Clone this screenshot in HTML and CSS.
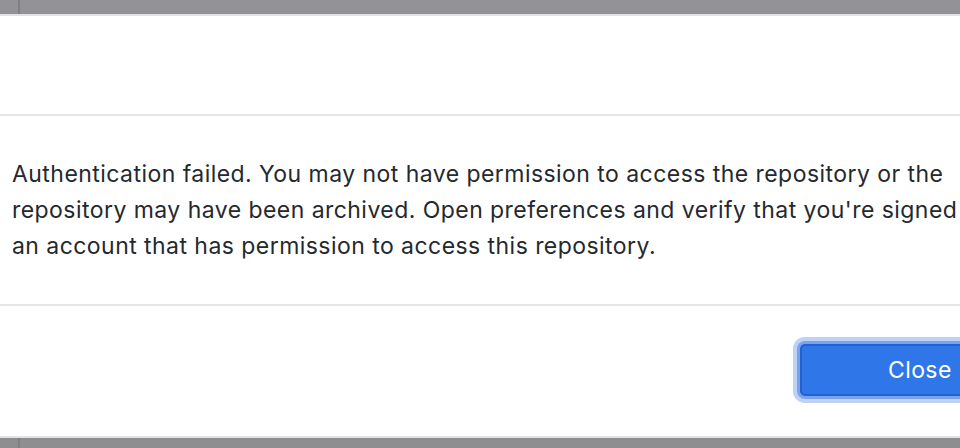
FILE: index.html
```html
<!DOCTYPE html>
<html>
<head>
<meta charset="utf-8">
<link rel="stylesheet" href="styles.css">
</head>
<body>
<div class="screen">
  <div class="chrome chrome-top"><span class="chrome-split"></span></div>
  <div class="strip"></div>
  <div class="dialog">
    <div class="dialog-header"></div>
    <div class="divider"></div>
    <div class="dialog-content">
      <p class="message">Authentication failed. You may not have permission to access the repository or the<br>repository may have been archived. Open preferences and verify that you're signed<br>an account that has permission to access this repository.</p>
    </div>
    <div class="divider"></div>
    <div class="dialog-footer">
      <button class="btn-primary">Close</button>
    </div>
  </div>
  <div class="strip"></div>
  <div class="chrome chrome-bottom"><span class="chrome-split"></span></div>
</div>
</body>
</html>
```
FILE: styles.css
```css
html, body {
  margin: 0;
  padding: 0;
  background: #ffffff;
}
body {
  width: 960px;
  height: 448px;
  overflow: hidden;
  font-family: Inter, "Noto Sans", sans-serif;
}
.screen {
  display: flex;
  flex-direction: column;
  width: 960px;
  height: 448px;
}
.chrome {
  background: #939395;
  display: flex;
  flex-shrink: 0;
}
.chrome-top {
  height: 14px;
}
.chrome-bottom {
  height: 10px;
  background: #8e8e90;
}
.chrome-split {
  margin-left: 18px;
  width: 2px;
  background: #808082;
}
.strip {
  height: 2px;
  background: #e2e3e8;
  flex-shrink: 0;
}
.dialog {
  flex: 1;
  display: flex;
  flex-direction: column;
  background: #ffffff;
}
.dialog-header {
  height: 98px;
}
.divider {
  height: 2px;
  background: #e3e5e9;
}
.dialog-content {
  padding: 40px 0 0 12px;
  height: 148px;
}
.message {
  margin: 0;
  font-size: 23px;
  letter-spacing: 0.45px;
  line-height: 36px;
  color: #24292e;
  white-space: nowrap;
}
.dialog-footer {
  flex: 1;
  display: flex;
  justify-content: flex-end;
  align-items: flex-start;
  padding-top: 38px;
  margin-right: -60px;
}
.btn-primary {
  width: 220px;
  height: 52px;
  padding: 0 0 0 86px;
  text-align: left;
  font-family: Inter, "Noto Sans", sans-serif;
  font-size: 23px;
  letter-spacing: 0.4px;
  color: #ffffff;
  background: #2f76e8;
  border: 2px solid #2361cf;
  border-radius: 5px;
  box-shadow: 0 0 0 3px #7aa3ec, 0 0 0 7px #bed2f5;
}
```
